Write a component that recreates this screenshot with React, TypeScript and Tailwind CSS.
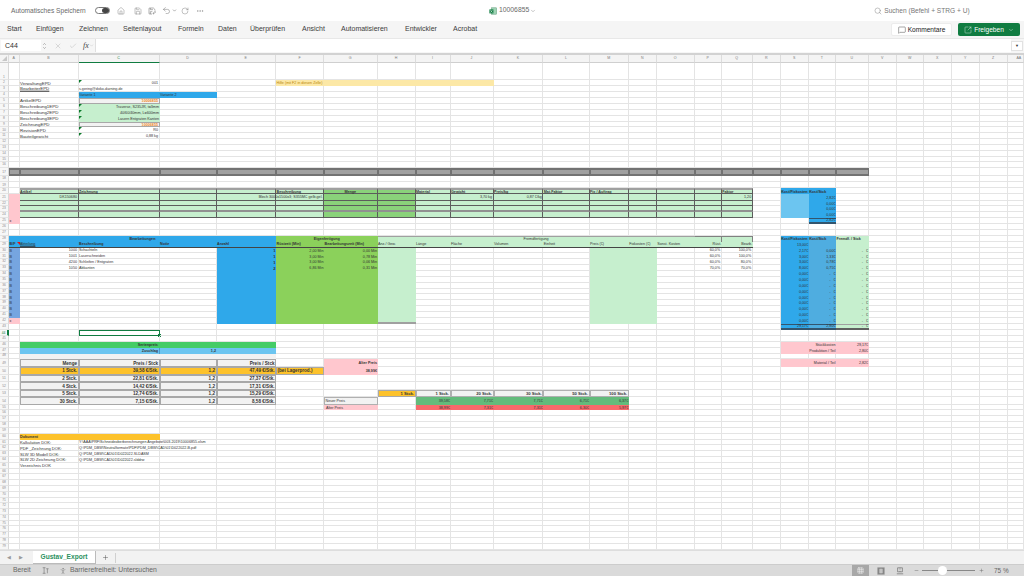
import React from "react";
import { Home, Save, Undo2, RotateCw, MoreHorizontal, ChevronDown, Search, MessageSquare, SquareArrowOutUpRight, X, Check, ChevronUp, Plus, Grid3x3, Minus, PersonStanding } from "lucide-react";

const colEdges = [0, 9, 19.5, 78.5, 159.5, 216.5, 276, 324, 377.5, 415.5, 450.5, 493.5, 543.3, 589.6, 628.7, 656.7, 694.7, 721.7, 752.7, 780.7, 808.7, 836, 868.7, 896.7, 924, 951.7, 979.7, 1007.7, 1024];
const colNames = ["", "A", "B", "C", "D", "E", "F", "G", "H", "I", "J", "K", "L", "M", "N", "O", "P", "Q", "R", "S", "T", "U", "V", "W", "X", "Y", "Z", "AA"];
const rowEdges: number[] = (() => {
  const e = [63.3, 80.3];
  const add = (n: number, end: number) => { const s = e[e.length - 1]; for (let i = 1; i <= n; i++) e.push(s + ((end - s) * i) / n); };
  add(12, 151); add(3, 168); add(1, 176); add(1, 182); add(1, 188.5); add(1, 194.3); add(1, 200.7); add(1, 206.5); add(1, 212); add(1, 217.7);
  add(1, 224); add(1, 230); add(1, 236); add(1, 241.7); add(1, 247.7); add(13, 324); add(1, 330); add(1, 336.7); add(1, 342); add(1, 348); add(1, 354);
  add(1, 359.5); add(1, 367); add(1, 375); add(1, 382.5); add(1, 390); add(1, 397.5); add(1, 405); add(1, 410.7); add(4, 434); add(1, 440); add(19, 550);
  return e;
})();

type Spec = { t?: string; c?: string; cs?: number; mark?: "g" | "r" | "sel" };
const cells = new Map<string, Spec>();
const ci = (l: string) => colNames.indexOf(l);
const put = (col: string, row: number, t: string, c = "", cs = 1, mark?: Spec["mark"]) => cells.set(`${row},${ci(col)}`, { t, c, cs, mark });

const plain = "border-r border-b border-[#e4e4e4]";
const green = "bg-[#c6efce]";
const gridDark = "border-r border-b border-[#5c5c5c]";
const blue = "bg-[#2fa8ea]";
const dash = "-\u00a0\u00a0\u00a0€";

// top info block
[["VerwaltungEPD", 2], ["BearbeiterEPD", 3], ["ArtikelEPD", 5], ["Beschreibung1EPD", 6], ["Beschreibung2EPD", 7], ["Beschreibung3EPD", 8], ["ZeichnungEPD", 9], ["RevisionEPD", 10], ["Bauteilgewicht", 11]].forEach(([t, r]) =>
  put("B", r as number, t as string, r === 3 ? `${plain} text-[4.4px] text-[#2a6f9e] underline` : `${plain} text-[4.4px]`));
put("C", 2, "001", `${plain} justify-end`, 1, "g");
put("C", 3, "s.gering@doko-darning.de", plain);
put("C", 4, "Variante 1", `${blue} text-[#10304a]`);
put("D", 4, "Variante 2", `${blue} text-[#10304a]`);
put("C", 5, "10006855", "bg-[#f2f2f2] border border-[#a8a8a8] justify-end text-[#f08a24] font-bold");
put("C", 6, "Traverse, S235JR, t=3mm", `${green} justify-end text-[#0b6b1f]`, 1, "g");
put("C", 7, "40/60/40mm, L=600mm", `${green} justify-end text-[#0b6b1f]`, 1, "g");
put("C", 8, "Lasern Entgraten Kanten", `${green} justify-end text-[#0b6b1f]`, 1, "g");
put("C", 9, "10006855", "bg-[#f2f2f2] border border-[#a8a8a8] justify-end text-[#f08a24] font-bold");
put("C", 10, "R0", `${plain} justify-end`, 1, "g");
put("C", 11, "0,88 kg", `${plain} justify-end`, 1, "g");
put("F", 2, "Hilfe (mit F2 in diesen Zelle)", "bg-[#fce8a6] text-[#b8860b]", 5);

// grey divider row
colNames.slice(1, 22).forEach((l) => put(l, 17, "", "bg-[#a0a0a0] border-y-2 border-x border-[#727272]"));

// material table
const matCols = ["B", "C", "D", "E", "F", "G", "H", "I", "J", "K", "L", "M", "N", "O", "P", "Q"];
[20, 21, 22, 23, 24].forEach((r) =>
  matCols.forEach((l) => {
    const fill = l === "G" || l === "H" ? "bg-[#8ad27a]" : green;
    const top = r === 20 ? " border-t-2 border-t-[#a0a0a0]" : "";
    const bot = r === 23 ? " border-b-2 border-b-[#909090]" : "";
    put(l, r, "", `${fill} ${gridDark}${top}${bot}`);
  })
);
const headM: [string, string][] = [["B", "Artikel"], ["C", "Zeichnung"], ["F", "Beschreibung"], ["I", "Material"], ["J", "Gewicht"], ["K", "Preis/kg"], ["L", "Mat.Faktor"], ["M", "Fix / Auftrag"], ["Q", "Faktor"]];
headM.forEach(([l, t]) => put(l, 20, t, `${green} ${gridDark} border-t-2 border-t-[#a0a0a0] font-bold`));
put("G", 20, "Menge", `bg-[#8ad27a] ${gridDark} border-t-2 border-t-[#a0a0a0] font-bold justify-center`);
put("B", 21, "DK150680", `${green} ${gridDark} justify-end`);
put("F", 21, "Blech 3000x1500x3; S355MC gelb.gel.", `${green} ${gridDark} justify-end`);
put("J", 21, "3,70 kg", `${green} ${gridDark} justify-end`);
put("K", 21, "0,87 €/kg", `${green} ${gridDark} justify-end`);
put("Q", 21, "1,20", `${green} ${gridDark} justify-end`);
[21, 22, 23, 24].forEach((r) => put("A", r, "", "bg-[#ffc7ce]"));
put("A", 25, "x", "bg-[#ffc7ce] text-[#9c0006]");
put("S", 20, "Kost/Fixkosten", `${blue} text-[#10304a] font-bold`);
put("T", 20, "Kost/Stck", `${blue} text-[#10304a] font-bold`);
[21, 22, 23, 24].forEach((r, i) => {
  put("S", r, "", "bg-[#6cc5f0]");
  put("T", r, i === 0 ? "2,82€" : "0,00€", `${blue} justify-end text-[#10304a]`);
});
put("T", 25, "2,82€", `${blue} justify-end text-[#10304a] border-t border-b-2 border-[#33556e]`);

// operations header
put("A", 28, "Bearbeitungen", `${blue} justify-center font-bold text-[#10304a]`, 5);
put("F", 28, "Eigenfertigung", "bg-[#8bd15b] justify-center font-bold text-[#1c4a14]", 2);
put("H", 28, "Fremdfertigung", `${green} justify-center text-[#1f4e79] border-t border-[#a0a0a0]`, 8);
put("P", 28, "", `${green} border-t border-r border-[#808080]`);
put("Q", 28, "", `${green} border-t border-r border-[#808080]`);
const u = "border-b border-[#444444]";
put("A", 29, "B/F", `${blue} ${u} font-bold text-[#10304a]`, 1, "r");
put("B", 29, "Abteilung", `${blue} ${u} text-[#4c86b8] underline`);
put("C", 29, "Beschreibung", `${blue} ${u} font-bold text-[#10304a]`);
put("D", 29, "Notiz", `${blue} ${u} font-bold text-[#10304a]`);
put("E", 29, "Anzahl", `${blue} ${u} font-bold text-[#10304a]`);
put("F", 29, "Rüstzeit (Min)", `bg-[#8bd15b] ${u} font-bold text-[#1c3a14]`);
put("G", 29, "Bearbeitungszeit (Min)", `bg-[#8bd15b] ${u} font-bold text-[#1c3a14]`);
[["H", "Anz./ Gew."], ["I", "Länge"], ["J", "Fläche"], ["K", "Volumen"], ["L", "Einheit"], ["M", "Preis (€)"], ["N", "Fixkosten (€)"], ["O", "Sonst. Kosten"]].forEach(([l, t]) =>
  put(l, 29, t, `${green} ${u} text-[#1f4e79]`));
put("P", 29, "Rüst.", `${green} ${u} justify-end text-[#1f4e79]`);
put("Q", 29, "Bearb.", `${green} ${u} justify-end text-[#1f4e79]`);

const ops = [
  ["1000", "Schachteln", "1", "2,00 Min", "0,00 Min", "60,0%", "100,0%"],
  ["1001", "Laserschneiden", "1", "3,00 Min", "0,78 Min", "60,0%", "100,0%"],
  ["4200", "Schleifen / Entgraten", "1", "3,00 Min", "0,06 Min", "60,0%", "80,0%"],
  ["1050", "Abkanten", "2", "6,86 Min", "0,31 Min", "70,0%", "70,0%"],
];
for (let r = 30; r <= 42; r++) {
  const o = ops[r - 30];
  put("A", r, r === 42 ? "x" : "B", r === 42 ? "bg-[#ffc7ce] text-[#9c0006]" : "bg-[#76a5e0] text-[#10304a]");
  if (o) {
    put("B", r, o[0], `${plain} justify-end`);
    put("C", r, o[1], plain);
    put("P", r, o[5], `${plain} justify-end`);
    put("Q", r, o[6], `${plain} justify-end`);
  }
  put("E", r, o ? o[2] : "", `${blue} justify-end font-bold text-[4.2px]`);
  put("F", r, o ? o[3] : "", "bg-[#8bd15b] justify-end");
  put("G", r, o ? o[4] : "", "bg-[#8bd15b] justify-end");
  put("H", r, "", r === 42 ? `${green} border-b-2 border-[#a0a0a0]` : green);
  put("M", r, "", green);
  put("N", r, "", green);
}

// right cost block
put("S", 28, "Kost/Fixkosten", `${blue} text-[#10304a] font-bold`);
put("T", 28, "Kost/Stck", `bg-[#4fade0] text-[#10304a] font-bold`);
put("U", 28, "Fremdf. / Stck", `${green} text-[#1f4e79] font-bold`);
put("S", 29, "13,00€", `${blue} justify-end text-[#10304a]`);
put("T", 29, "", "bg-[#4fade0]");
put("U", 29, "", green);
const sv = ["2,17€", "3,00€", "3,00€", "8,00€"];
const tv = ["0,00€", "1,33€", "0,78€", "0,75€"];
for (let r = 30; r <= 42; r++) {
  const i = r - 30;
  put("S", r, sv[i] ?? "0,00€", `${blue} justify-end text-[#10304a]`);
  put("T", r, tv[i] ?? dash, `bg-[#4fade0] justify-end text-[#10304a]`);
  put("U", r, dash, `${green} justify-end text-[#1f4e79]`);
}
const totalB = "border-t border-b-2 border-[#33556e]";
put("S", 43, "29,17€", `${blue} justify-end text-[#10304a] ${totalB}`);
put("T", 43, "2,80€", `bg-[#4fade0] justify-end text-[#10304a] ${totalB}`);
put("U", 43, dash, `${green} justify-end text-[#1f4e79] border-t border-t-[#a0a0a0] border-b-2 border-b-[#606060]`);

put("C", 44, "", "border border-[#107c41]", 1, "sel");

// price block
put("B", 46, "Serienpreis", "bg-[#44cc66] justify-center font-bold text-[#10401c]", 4);
put("B", 47, "", "bg-[#6cc5f0]");
put("C", 47, "Zuschlag", "bg-[#6cc5f0] justify-end font-bold text-[#10304a] border-r border-[#4c9cc8]");
put("D", 47, "1,2", "bg-[#6cc5f0] justify-end font-bold text-[#10304a]");
put("E", 47, "", "bg-[#6cc5f0]");
["B", "C", "D", "E"].forEach((l) => put(l, 48, "", "bg-[#f2f2f2]"));
const pb = "bg-[#f2f2f2] border border-[#a8a8a8] justify-end font-bold text-[4.6px]";
const ob = "bg-[#fdc22b] border border-[#a8a8a8] justify-end font-bold text-[4.6px]";
put("B", 49, "Menge", pb); put("C", 49, "Preis / Stck", pb); put("D", 49, "", pb); put("E", 49, "Preis / Stck", pb);
const prices = [["1 Stck.", "39,58 €/Stk.", "47,49 €/Stk."], ["2 Stck.", "22,81 €/Stk.", "27,37 €/Stk."], ["4 Stck.", "14,42 €/Stk.", "17,31 €/Stk."], ["5 Stck.", "12,74 €/Stk.", "15,29 €/Stk."], ["30 Stck.", "7,15 €/Stk.", "8,58 €/Stk."]];
prices.forEach((p, i) => {
  const s = i === 0 ? ob : pb;
  put("B", 50 + i, p[0], s); put("C", 50 + i, p[1], s); put("D", 50 + i, "1,2", s); put("E", 50 + i, p[2], s);
});
put("F", 50, "(bei Lagerprod.)", "bg-[#fdc22b] border border-[#a8a8a8] font-bold text-[4.6px]");
put("G", 49, "Alter Preis", "bg-[#ffc7ce] justify-end font-bold text-[#5c1a22]");
put("G", 50, "38,99€", "bg-[#ffc7ce] justify-end font-bold text-[#3c1a22]");
put("H", 53, "1 Stck.", "bg-[#fdc22b] border border-[#a8a8a8] justify-end font-bold text-[4.2px]");
const cmp = ["I", "J", "K", "L", "M"];
["1 Stck.", "20 Stck.", "30 Stck.", "50 Stck.", "100 Stck."].forEach((t, i) => put(cmp[i], 53, t, "bg-[#f2f2f2] border border-[#b0b0b0] justify-end font-bold text-[4.2px]"));
["39,58€", "7,71€", "7,71€", "6,71€", "6,37€"].forEach((t, i) => put(cmp[i], 54, t, "bg-[#63bb7b] justify-end text-[#0f3d1c]"));
["38,99€", "7,31€", "7,31€", "6,30€", "5,97€"].forEach((t, i) => put(cmp[i], 55, t, "bg-[#f8696b] justify-end text-[#9c0006]"));
put("G", 54, "Neuer Preis", "bg-[#f2f2f2] border border-[#b0b0b0]");
put("G", 55, "Alter Preis", "bg-[#ffc7ce] text-[#9c0006] pl-[2px]");

// right pink block
const pink = "bg-[#ffc7ce] justify-end text-[#9c0006]";
[[46, "Stückkosten", "29,17€"], [47, "Produktion / Teil", "2,80€"], [49, "Material / Teil", "2,82€"]].forEach(([r, a, b]) => {
  put("S", r as number, "", "bg-[#ffc7ce]");
  put("T", r as number, a as string, pink);
  put("U", r as number, b as string, pink);
});

// documents
put("B", 60, "Dokument", "bg-[#fdc22b] font-bold");
put("C", 60, "", "bg-[#fdc22b]");
[["Kalkulation DOK:", "Y:\\AAA\\PRF\\Schneideoberberechnungen Angebote\\003-2019\\10006855.xlsm"], ["PDF _Zeichnung DOK:", "Q:\\PDM_DBW\\Neutralformate\\PDF\\PDM_DBW\\CAD\\01\\D022022-B.pdf"], ["SLW 3D Modell DOK:", "Q:\\PDM_DBW\\CAD\\01\\D022022.SLDASM"], ["SLW 2D Zeichnung DOK:", "Q:\\PDM_DBW\\CAD\\01\\D022022.slddrw"], ["Verzeichnis DOK", ""]].forEach(([a, b], i) => {
  put("B", 61 + i, a, `${plain} text-[4.1px]`);
  if (b) put("C", 61 + i, b, plain);
});

function Sheet() {
  const out: React.ReactNode[] = [];
  for (let c = 0; c < colNames.length; c++) {
    const sel = c === 3;
    out.push(
      <div key={`h${c}`} style={{ gridRow: 1, gridColumn: c + 1 }} className={`relative flex items-center justify-center bg-[#f4f4f4] border-r border-[#dcdcdc] text-[3.6px] ${sel ? "border-b border-b-[#107c41] text-[#107c41] bg-[#e8e8e8]" : "border-b border-b-[#cfcfcf] text-[#7a7a7a]"} ${c === 27 ? "pl-[7px]" : ""}`}>
        {c === 0 ? <span className="absolute right-[1px] bottom-[1px] w-0 h-0 border-l-[5px] border-t-[5px] border-l-transparent border-t-transparent border-b-0 border-r-[5px] border-r-[#c8c8c8]" /> : colNames[c]}
      </div>
    );
  }
  for (let r = 1; r < rowEdges.length; r++) {
    const rowSel = r === 44;
    out.push(
      <div key={`r${r}`} style={{ gridRow: r + 1, gridColumn: 1 }} className={`flex items-end justify-center pb-[0.5px] bg-[#f7f7f7] border-b border-[#e4e4e4] text-[3.3px] leading-none ${rowSel ? "border-r-2 border-r-[#107c41] text-[#107c41]" : "border-r border-r-[#d8d8d8] text-[#8a8a8a]"}`}>
        {r}
      </div>
    );
    let skip = 0;
    for (let c = 1; c < colNames.length; c++) {
      if (skip > 0) { skip--; continue; }
      const s = cells.get(`${r},${c}`);
      const span = s?.cs ?? 1;
      skip = span - 1;
      out.push(
        <div key={`${r}-${c}`} style={{ gridRow: r + 1, gridColumn: `${c + 1} / span ${span}` }} className={`relative flex items-center whitespace-nowrap px-[0.5px] text-[3.7px] leading-none text-[#333333] min-w-0 ${s ? s.c : plain}`}>
          {s?.mark === "g" && <span className="absolute left-0 top-0 w-0 h-0 border-t-[3px] border-r-[3px] border-t-[#0a7a2a] border-r-transparent" />}
          {s?.mark === "r" && <span className="absolute right-0 top-0 w-0 h-0 border-t-[3px] border-l-[3px] border-t-[#e01010] border-l-transparent" />}
          {s?.mark === "sel" && <span className="absolute -right-[2px] -bottom-[2px] w-[3px] h-[3px] bg-[#107c41]" />}
          {s?.t ? <span className="translate-y-[0.7px]">{s.t}</span> : null}
        </div>
      );
    }
  }
  return (
    <div className="grid flex-1 overflow-hidden bg-white" style={{
      gridTemplateColumns: colEdges.slice(1).map((e, i) => `${e - colEdges[i]}px`).join(" "),
      gridTemplateRows: `8.8px ${rowEdges.slice(1).map((e, i) => `${e - rowEdges[i]}px`).join(" ")}`,
    }}>
      {out}
    </div>
  );
}

const tabs: [string, string][] = [["Start", "w-[29px] pl-[7px]"], ["Einfügen", "w-[43px]"], ["Zeichnen", "w-[44px]"], ["Seitenlayout", "w-[55px]"], ["Formeln", "w-[40px]"], ["Daten", "w-[32px]"], ["Überprüfen", "w-[52px]"], ["Ansicht", "w-[39px]"], ["Automatisieren", "w-[64px]"], ["Entwickler", "w-[48px]"], ["Acrobat", "w-[40px]"]];

export default function App() {
  return (
    <div className="w-[1024px] h-[576px] overflow-hidden flex flex-col bg-white font-['Liberation_Sans',sans-serif]">
      {/* title bar */}
      <div className="h-[21px] shrink-0 relative flex items-center bg-white text-[#6a6a6a]">
        <span className="ml-[11px] w-[84px] text-[6.6px]">Automatisches Speichern</span>
        <span className="w-[15px] h-[7px] rounded-full border border-[#777777] bg-white flex justify-end">
          <span className="w-[7px] h-full rounded-full bg-[#444444]" />
        </span>
        <Home className="ml-[7px] w-[8px] h-[8px]" strokeWidth={1.2} />
        <Save className="ml-[9px] w-[8px] h-[8px]" strokeWidth={1.2} />
        <svg viewBox="0 0 24 24" fill="none" stroke="currentColor" strokeWidth="1.6" className="ml-[6px] w-[8px] h-[8px]">
          <path d="M12 21H5a2 2 0 0 1-2-2V5a2 2 0 0 1 2-2h11l5 5v3" />
          <path d="M7 3v5h8M7 21v-7h6" />
          <path d="M15 21l1-3 5-5 2 2-5 5z" />
        </svg>
        <Undo2 className="ml-[6px] w-[9px] h-[9px]" strokeWidth={1.2} />
        <ChevronDown className="ml-[1px] w-[5px] h-[5px]" strokeWidth={2.5} />
        <RotateCw className="ml-[4px] w-[8px] h-[8px]" strokeWidth={1.2} />
        <MoreHorizontal className="ml-[7px] w-[8px] h-[8px]" strokeWidth={1.2} />
        <div className="ml-[285px] flex items-center gap-[1px]">
          <svg viewBox="0 0 10 10" className="w-[8px] h-[8px]"><rect x="3" y="1" width="6.5" height="8" fill="#9fd3b4" stroke="#5a9a76" strokeWidth="0.6" /><rect x="0.5" y="3" width="5" height="5" fill="#107c41" /><path d="M1.8 4l2.4 3M4.2 4L1.8 7" stroke="#fff" strokeWidth="0.6" /></svg>
          <span className="ml-[1px] text-[6.8px]">10006855</span>
          <ChevronDown className="w-[6px] h-[6px]" strokeWidth={1.5} />
        </div>
        <Search className="ml-[338px] w-[8px] h-[8px] text-[#888888]" strokeWidth={1.5} />
        <span className="ml-[2px] text-[6.6px] text-[#777777]">Suchen (Befehl + STRG + U)</span>
      </div>
      {/* ribbon */}
      <div className="h-[17px] shrink-0 flex items-center bg-[#f5f5f5] text-[#3c3c3c] text-[7px]">
        {tabs.map(([t, w]) => <span key={t} className={`${w} shrink-0 ${t === "Start" ? "" : "pl-[7px]"}`}>{t}</span>)}
        <div className="ml-[405px] h-[13px] w-[61px] flex items-center justify-center gap-[2px] bg-white rounded-[2px] border border-[#ececec] text-[6.6px] text-[#222222]">
          <MessageSquare className="w-[8px] h-[8px]" strokeWidth={1.2} />Kommentare
        </div>
        <div className="ml-[6px] h-[13px] w-[62px] flex items-center justify-center gap-[2px] bg-[#107c41] rounded-[2px] text-[6.6px] text-white">
          <SquareArrowOutUpRight className="w-[8px] h-[8px]" strokeWidth={1.2} />Freigeben<ChevronDown className="ml-[2px] w-[6px] h-[6px]" strokeWidth={1.5} />
        </div>
      </div>
      {/* formula bar */}
      <div className="h-[16.5px] shrink-0 flex items-center bg-[#f6f6f6] border-b-[2px] border-[#d2d2d2] border-t border-t-[#e8e8e8]">
        <div className="ml-[1px] w-[40px] h-[11px] bg-white flex items-center pl-[4px] text-[7px] text-[#333333]">C44</div>
        <div className="w-[6px] flex flex-col items-center text-[#555555]">
          <ChevronUp className="w-[5px] h-[4px]" strokeWidth={2.5} />
          <ChevronDown className="w-[5px] h-[4px]" strokeWidth={2.5} />
        </div>
        <X className="ml-[7px] w-[8px] h-[8px] text-[#a8a8a8]" strokeWidth={1.2} />
        <Check className="ml-[7px] w-[8px] h-[8px] text-[#a8a8a8]" strokeWidth={1.2} />
        <span className="ml-[6px] text-[8px] italic font-['Liberation_Serif',serif] text-[#444444]">fx</span>
        <ChevronDown className="w-[5px] h-[5px] text-[#aaaaaa]" strokeWidth={1.5} />
        <div className="ml-[1px] h-[13px] flex-1 bg-white border-l border-[#e0e0e0]" />
        <div className="mr-[1px] w-[12px] h-[10px] bg-white border border-[#e2e2e2] flex items-center justify-center text-[4px] text-[#333333]">▼</div>
      </div>
      <Sheet />
      {/* sheet tabs */}
      <div className="h-[14px] shrink-0 flex items-center bg-[#f2f2f2] border-t border-[#dddddd] text-[#9a9a9a]">
        <span className="ml-[7px] w-[12px] text-[5px]">◀</span>
        <span className="w-[14px] text-[5px]">▶</span>
        <div className="w-[63px] h-[13px] -mt-[1px] bg-white flex items-center justify-center text-[6.6px] font-bold text-[#2b9160] border-b border-[#bbbbbb] border-r">Gustav_Export</div>
        <Plus className="ml-[6px] w-[7px] h-[7px] text-[#444444]" strokeWidth={1.5} />
        <span className="ml-[6px] h-[10px] border-l border-[#d0d0d0]" />
      </div>
      {/* status bar */}
      <div className="h-[12px] shrink-0 flex items-center bg-[#dadada] text-[#666666] text-[6.8px] border-t border-[#cccccc]">
        <span className="ml-[13px] w-[29px]">Bereit</span>
        <svg viewBox="0 0 10 10" fill="none" stroke="currentColor" strokeWidth="0.8" className="w-[7px] h-[7px]">
          <path d="M1 1h4M3 1v8M1 9h4M6 2.5h3.5M7.7 2.5V9" />
        </svg>
        <PersonStanding className="ml-[10px] w-[8px] h-[8px]" strokeWidth={1.2} />
        <span className="ml-[3px] w-[87px] whitespace-nowrap">Barrierefreiheit: Untersuchen</span>
        <div className="ml-[695px] w-[17px] h-full bg-[#a8a8a8] flex items-center justify-center">
          <Grid3x3 className="w-[7px] h-[7px] text-white" strokeWidth={1.5} />
        </div>
        <svg viewBox="0 0 10 10" className="ml-[8px] w-[8px] h-[8px]">
          <rect x="0.5" y="0.5" width="9" height="9" fill="#8f8f8f" />
          <rect x="2.5" y="1.5" width="5" height="7" fill="#c4c4c4" stroke="#666666" strokeWidth="0.5" />
        </svg>
        <svg viewBox="0 0 10 10" fill="none" stroke="currentColor" strokeWidth="0.8" className="ml-[11px] w-[8px] h-[8px]">
          <path d="M2 1h6v5H2zM1 8.5h8" />
          <path d="M5 1v5" strokeDasharray="1 1" />
        </svg>
        <Minus className="ml-[10px] w-[5px] h-[5px]" strokeWidth={2} />
        <div className="ml-[3px] w-[53px] h-[1px] bg-[#888888] relative">
          <span className="absolute left-[16px] -top-[4px] w-[9px] h-[9px] rounded-full bg-white" />
        </div>
        <Plus className="ml-[4px] w-[5px] h-[5px]" strokeWidth={2} />
        <span className="ml-[10px] text-[6.4px] whitespace-nowrap">75 %</span>
      </div>
    </div>
  );
}
